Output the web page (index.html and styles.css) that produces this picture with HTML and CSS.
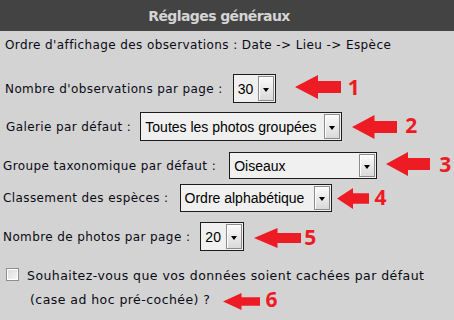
FILE: index.html
```html
<!DOCTYPE html>
<html lang="fr">
<head>
<meta charset="utf-8">
<title>Réglages généraux</title>
<link rel="stylesheet" href="styles.css">
</head>
<body>
<div class="panel">
  <div class="header">Réglages généraux</div>
  <div class="order">Ordre d'affichage des observations : Date -&gt; Lieu -&gt; Espèce</div>

  <div class="row row1">
    <span class="label">Nombre d'observations par page :</span>
    <div class="select sel1"><span class="val">30</span><span class="btn"><i class="tri"></i></span></div>
    <svg class="arrow a1" viewBox="0 0 46 24" preserveAspectRatio="none"><polygon points="0,12 23,0 23,6 46,6 46,18 23,18 23,24" fill="#ed1c24"/></svg>
    <span class="num n1">1</span>
  </div>

  <div class="row row2">
    <span class="label">Galerie par défaut :</span>
    <div class="select sel2"><span class="val">Toutes les photos groupées</span><span class="btn"><i class="tri"></i></span></div>
    <svg class="arrow a2" viewBox="0 0 46 24" preserveAspectRatio="none"><polygon points="0,12 23,0 23,6 46,6 46,18 23,18 23,24" fill="#ed1c24"/></svg>
    <span class="num n2">2</span>
  </div>

  <div class="row row3">
    <span class="label">Groupe taxonomique par défaut :</span>
    <div class="select sel3"><span class="val">Oiseaux</span><span class="btn"><i class="tri"></i></span></div>
    <svg class="arrow a3" viewBox="0 0 46 24" preserveAspectRatio="none"><polygon points="0,12 23,0 23,6 46,6 46,18 23,18 23,24" fill="#ed1c24"/></svg>
    <span class="num n3">3</span>
  </div>

  <div class="row row4">
    <span class="label">Classement des espèces :</span>
    <div class="select sel4"><span class="val">Ordre alphabétique</span><span class="btn"><i class="tri"></i></span></div>
    <svg class="arrow a4" viewBox="0 0 46 24" preserveAspectRatio="none"><polygon points="0,12 23,0 23,6 46,6 46,18 23,18 23,24" fill="#ed1c24"/></svg>
    <span class="num n4">4</span>
  </div>

  <div class="row row5">
    <span class="label">Nombre de photos par page :</span>
    <div class="select sel5"><span class="val">20</span><span class="btn"><i class="tri"></i></span></div>
    <svg class="arrow a5" viewBox="0 0 46 24" preserveAspectRatio="none"><polygon points="0,12 23,0 23,6 46,6 46,18 23,18 23,24" fill="#ed1c24"/></svg>
    <span class="num n5">5</span>
  </div>

  <div class="check-row">
    <span class="checkbox"></span>
    <div class="check-text">
      <div class="line1">Souhaitez-vous que vos données soient cachées par défaut</div>
      <div class="line2">
        <span>(case ad hoc pré-cochée) ?</span>
        <svg class="arrow a6" viewBox="0 0 46 24" preserveAspectRatio="none"><polygon points="0,12 23,0 23,6 46,6 46,18 23,18 23,24" fill="#ed1c24"/></svg>
        <span class="num n6">6</span>
      </div>
    </div>
  </div>
</div>
</body>
</html>
```
FILE: styles.css
```css
html, body {
  margin: 0;
  padding: 0;
}
body {
  width: 454px;
  height: 320px;
  overflow: hidden;
  background: #d3d3d3;
  font-family: "DejaVu Sans", Verdana, sans-serif;
  font-size: 12px;
  letter-spacing: 0.4px;
  color: #0a0a14;
}
.panel {
  display: flex;
  flex-direction: column;
}
.header {
  height: 31px;
  background: #434343;
  color: #d4d4d4;
  font-weight: bold;
  font-size: 14px;
  letter-spacing: -0.6px;
  display: flex;
  align-items: center;
  justify-content: center;
  padding-right: 16px;
}
.order {
  margin-top: 6px;
  line-height: 16px;
  padding-left: 5px;
}
.row {
  display: flex;
  align-items: center;
  padding-left: 5px;
}
.row1 { margin-top: 21px; }
.row2 { margin-top: 9px; padding-left: 6px; }
.row3 { margin-top: 11px; padding-left: 3px; }
.row4 { margin-top: 5px; padding-left: 3px; }
.row5 { margin-top: 10px; padding-left: 3px; }

.label {
  line-height: 16px;
  white-space: nowrap;
}
.select {
  box-sizing: border-box;
  height: 29px;
  border: 1px solid #1c1c1c;
  background: #f0f0f0;
  display: flex;
  align-items: center;
  justify-content: space-between;
  font-family: "Liberation Sans", Arial, sans-serif;
  font-size: 14px;
  letter-spacing: 0;
  color: #000;
  padding-left: 4px;
}
.val {
  white-space: nowrap;
}
.btn {
  box-sizing: border-box;
  width: 16px;
  align-self: stretch;
  margin: 1px;
  border: 1px solid #8c8c8c;
  background: linear-gradient(#fbfbfb, #d9d9d9);
  box-shadow: inset 1px 1px 0 #ffffff;
  display: flex;
  align-items: center;
  justify-content: center;
}
.tri {
  display: block;
  width: 0;
  height: 0;
  margin-top: 2px;
  border-left: 3.5px solid transparent;
  border-right: 3.5px solid transparent;
  border-top: 4px solid #000;
}
.sel1 { width: 43px; margin-left: 10px; }
.sel2 { width: 202px; margin-left: 9px; }
.sel3 { width: 148px; height: 27px; margin-left: 13px; }
.sel4 { width: 152px; height: 28px; margin-left: 11px; }
.sel5 { width: 44px; margin-left: 10px; }

.arrow {
  display: block;
  flex: none;
}
.a1 { width: 46px; height: 24px; margin-left: 19px; margin-top: -3px; }
.a2 { width: 45px; height: 24px; margin-left: 10px; }
.a3 { width: 44px; height: 24px; margin-left: 9px; margin-top: -3px; }
.a4 { width: 32px; height: 21px; margin-left: 5px; }
.a5 { width: 47px; height: 20px; margin-left: 10px; margin-top: 3px; }
.a6 { width: 37px; height: 17px; margin-left: 13px; margin-top: 5px; }

.num {
  font-family: "Open Sans", "DejaVu Sans", sans-serif;
  font-weight: bold;
  font-size: 21px;
  letter-spacing: 0;
  line-height: 24px;
  color: #ed1c24;
}
.n1 { margin-left: 7px; margin-top: -4px; }
.n2 { margin-left: 8px; margin-top: -4px; }
.n3 { margin-left: 9px; margin-top: -3px; }
.n4 { margin-left: 6px; margin-top: -2px; }
.n5 { margin-left: 3px; margin-top: 0; }
.n6 { margin-left: 5px; margin-top: 0; }

.check-row {
  display: flex;
  align-items: flex-start;
  margin-top: 13px;
  padding-left: 6px;
}
.checkbox {
  box-sizing: border-box;
  width: 13px;
  height: 13px;
  margin-top: 4px;
  border: 1px solid #8e8e8e;
  background: linear-gradient(135deg, #dcdcdc, #f6f6f6);
  box-shadow: inset 1px 1px 0 #ffffff, inset -1px -1px 0 #ffffff;
  flex: none;
}
.check-text {
  margin-left: 8px;
  line-height: 23px;
  font-size: 12.5px;
  letter-spacing: 0.45px;
}
.line2 {
  display: flex;
  align-items: center;
  padding-left: 3px;
}
```
